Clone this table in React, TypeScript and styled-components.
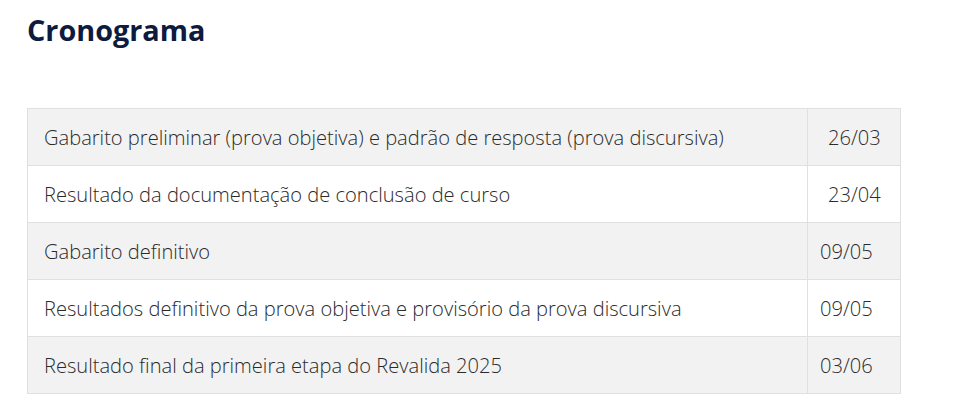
import React from 'react';
import styled, { createGlobalStyle } from 'styled-components';

const GlobalStyle = createGlobalStyle`
    body {
        margin: 0;
        background: #ffffff;
        font-family: "Open Sans", sans-serif;
    }
`;

const Page = styled.div`
    padding: 12px 27px 0 27px;
    width: 874px;
`;

const Title = styled.h2`
    margin: 0 0 60px 0;
    font-family: "Open Sans", sans-serif;
    font-weight: 700;
    font-size: 28.8px;
    line-height: 36px;
    color: #0d1b3e;
`;

const Table = styled.table`
    width: 874px;
    border-collapse: collapse;
    font-family: "Open Sans", sans-serif;
    font-size: 20.1px;
    font-weight: 300;
    color: #2b2b2b;
`;

const Row = styled.tr<{ striped: boolean }>`
    height: 57px;
    background: ${({ striped }) => (striped ? '#f2f2f2' : '#ffffff')};
`;

const Cell = styled.td`
    border: 1px solid #e0e0e4;
    padding: 0 16px;
`;

const DateCell = styled.td<{ indent: number }>`
    border: 1px solid #e0e0e4;
    width: 93px;
    box-sizing: border-box;
    padding: 0 0 0 ${({ indent }) => indent}px;
`;

// linhas do cronograma
const rows = [
    { label: 'Gabarito preliminar (prova objetiva) e padrão de resposta (prova discursiva)', date: '26/03', indent: 20 },
    { label: 'Resultado da documentação de conclusão de curso', date: '23/04', indent: 20 },
    { label: 'Gabarito definitivo', date: '09/05', indent: 12 },
    { label: 'Resultados definitivo da prova objetiva e provisório da prova discursiva', date: '09/05', indent: 12 },
    { label: 'Resultado final da primeira etapa do Revalida 2025', date: '03/06', indent: 12 },
];

const App: React.FC = () => {
    return (
        <>
            <GlobalStyle />
            <Page>
                <Title>Cronograma</Title>
                <Table>
                    <tbody>
                        {rows.map((r, i) => (
                            <Row key={i} striped={i % 2 === 0}>
                                <Cell>{r.label}</Cell>
                                <DateCell indent={r.indent}>{r.date}</DateCell>
                            </Row>
                        ))}
                    </tbody>
                </Table>
            </Page>
        </>
    );
};

export default App;
